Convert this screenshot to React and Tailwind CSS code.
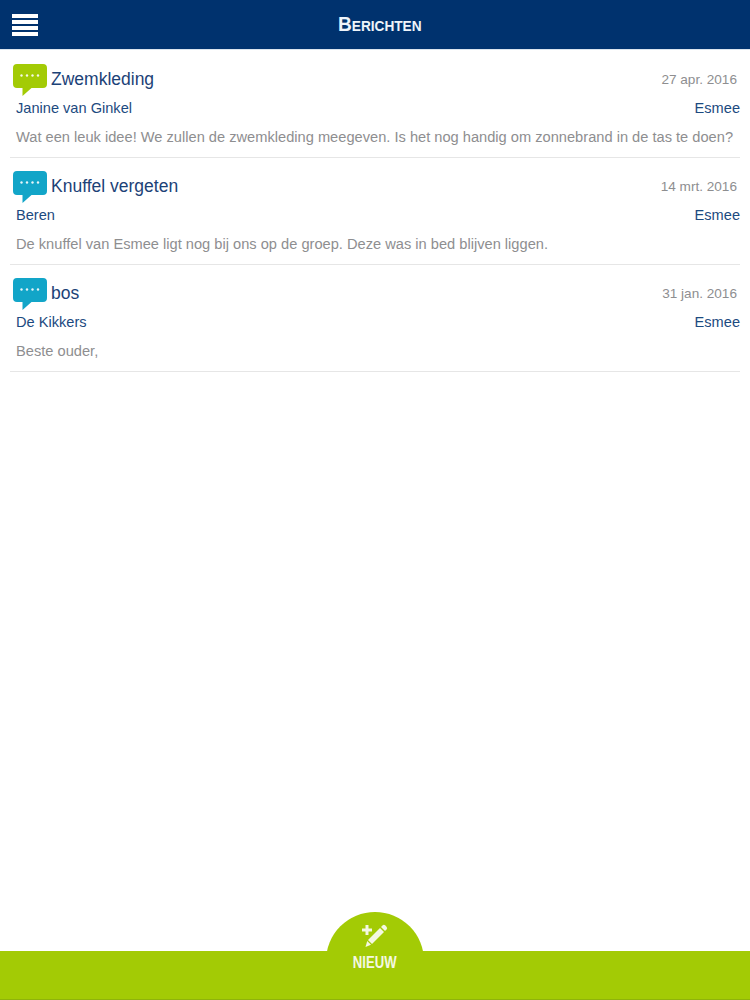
const items = [
  { color: "#a3cb05", title: "Zwemkleding", date: "27 apr. 2016", from: "Janine van Ginkel", to: "Esmee", body: "Wat een leuk idee! We zullen de zwemkleding meegeven. Is het nog handig om zonnebrand in de tas te doen?" },
  { color: "#12a5c8", title: "Knuffel vergeten", date: "14 mrt. 2016", from: "Beren", to: "Esmee", body: "De knuffel van Esmee ligt nog bij ons op de groep. Deze was in bed blijven liggen." },
  { color: "#12a5c8", title: "bos", date: "31 jan. 2016", from: "De Kikkers", to: "Esmee", body: "Beste ouder," },
];

function Bubble({ color }) {
  return (
    <svg width="35" height="32" viewBox="0 0 35 32" className="shrink-0">
      <path d="M4 0H30a4 4 0 0 1 4 4V20a4 4 0 0 1-4 4H18.5L9.5 32V24H4a4 4 0 0 1-4-4V4a4 4 0 0 1 4-4Z" fill={color} />
      <g fill="#ffffff" opacity="0.9">
        <circle cx="8.5" cy="11.5" r="1.2" />
        <circle cx="14" cy="11.5" r="1.2" />
        <circle cx="19.5" cy="11.5" r="1.2" />
        <circle cx="25" cy="11.5" r="1.2" />
      </g>
    </svg>
  );
}

function Row({ item }) {
  return (
    <div className="mx-[10px] h-[107px] border-b border-[#e6e6e6]">
      <div className="flex items-start px-[3px] pt-[13px] h-[45px]">
        <Bubble color={item.color} />
        <div className="ml-[3px] mt-[4px] text-[17.5px] leading-[22px] text-[#1c4277]">{item.title}</div>
        <div className="ml-auto mt-[7px] text-[13.6px] leading-[18px] text-[#8e8e90]">{item.date}</div>
      </div>
      <div className="flex justify-between pl-[6px] mt-[3px] text-[14.6px] leading-[18px] text-[#1c4a80]">
        <span>{item.from}</span>
        <span>{item.to}</span>
      </div>
      <div className="pl-[6px] mt-[11px] text-[14.65px] leading-[18px] text-[#8e8e90] whitespace-nowrap">{item.body}</div>
    </div>
  );
}

export default function App() {
  return (
    <div className="w-[750px] h-[1000px] bg-white flex flex-col relative overflow-hidden" style={{ fontFamily: '"Liberation Sans", Arial, sans-serif' }}>
      <header className="h-[50px] shrink-0 bg-[#00326e] border-b border-[#dbe4ee] flex items-center relative">
        <div className="ml-[12px] w-[26px] flex flex-col gap-[2px]">
          <div className="h-[4px] bg-white" />
          <div className="h-[4px] bg-white" />
          <div className="h-[4px] bg-white" />
          <div className="h-[4px] bg-white" />
        </div>
        <div className="absolute left-[338px] top-[12px] text-[21px] leading-[24px] font-bold text-[#eef4fa] origin-left scale-x-[0.91]" style={{ fontVariant: "small-caps" }}>Berichten</div>
      </header>
      <main className="flex-1 pt-[1px]">
        {items.map((it) => <Row key={it.title} item={it} />)}
      </main>
      <footer className="h-[49px] shrink-0 bg-[#a3cb05] border-b border-[#8fb30a] relative">
        <div className="absolute left-[326px] top-[-39px] w-[98px] h-[87px] rounded-t-[49px] bg-[#a3cb05] flex flex-col items-center">
          <svg width="26" height="25" viewBox="0 0 26 25" className="mt-[12px]" fill="#f4f8e2">
            <path d="M3.5 1h3v3.5H10v3H6.5V11h-3V7.5H0v-3h3.5Z" />
            <path d="M20.5 1.5a2 2 0 0 1 2.8 0l1.2 1.2a2 2 0 0 1 0 2.8L23 7l-4-4Z" />
            <path d="M18 4l4 4L10 20l-4-4Z" />
            <path d="M5.2 17L9 20.8 3.5 23Z" />
          </svg>
          <div className="mt-[5px] text-[16px] leading-[18px] font-bold text-[#f4f8e2] scale-x-[0.82]">NIEUW</div>
        </div>
      </footer>
    </div>
  );
}
